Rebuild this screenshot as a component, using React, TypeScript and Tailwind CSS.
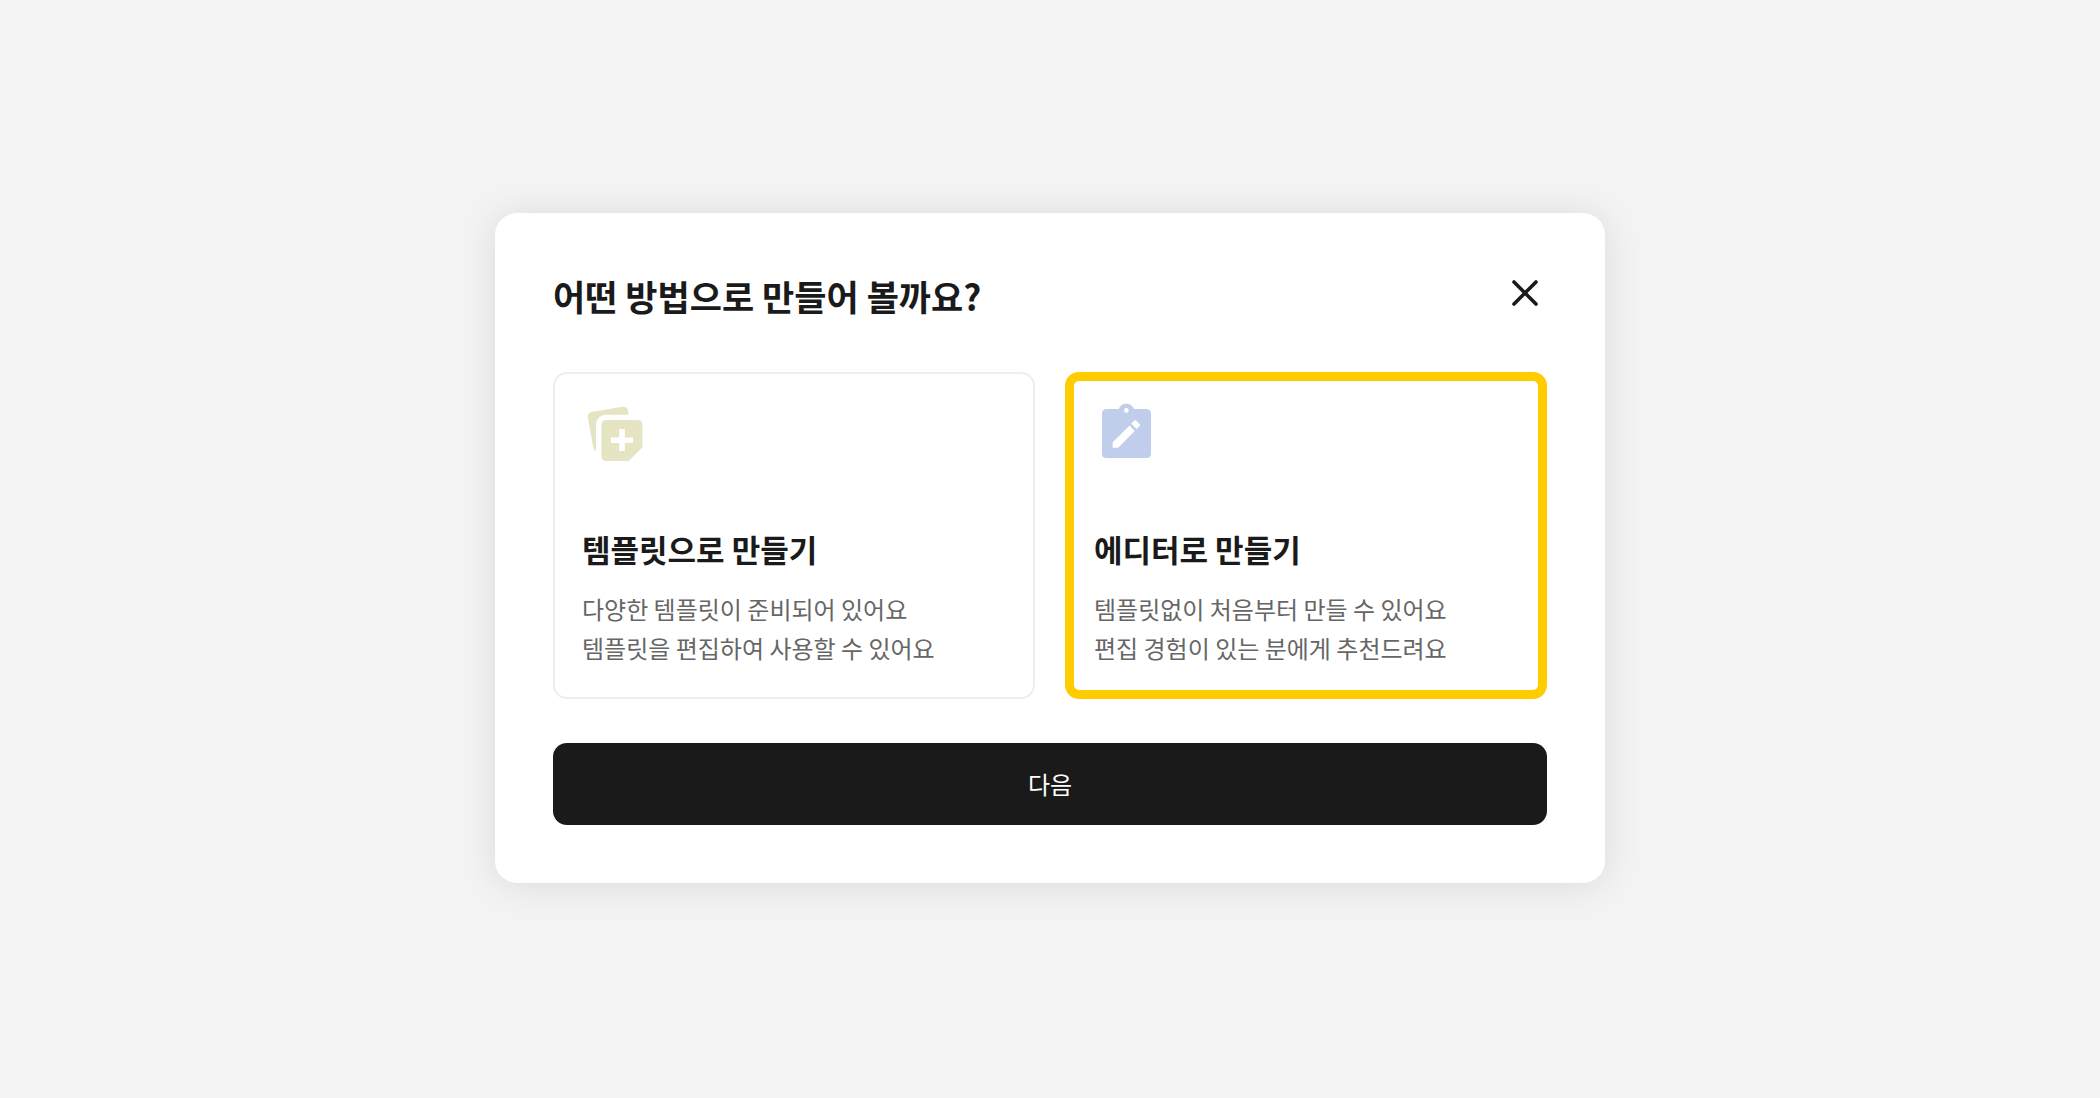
import { useState } from "react";
import type { ReactNode } from "react";

function TemplateIcon() {
  return (
    <svg viewBox="0 0 64 64" className="size-16 fill-[#e6e5c3]" aria-hidden="true">
      <path d="M14 51Q11.8 50 11.3 47.6L5.8 17.6Q5.2 13 9.6 12L40.5 6.7Q45 6.3 46 10.3L46.6 14.7H25Q14 15 14 26Z" />
      <path
        fillRule="evenodd"
        d="M24.3 20H55.5Q60.4 20 60.4 25V47.3L46.7 61H24.3Q19.4 61 19.4 56V25Q19.4 20 24.3 20ZM37.2 29V37.5H29V43H37.2V51H42.8V43H51V37.5H42.8V29Z"
      />
    </svg>
  );
}

function EditorIcon() {
  return (
    <svg viewBox="0 0 64 64" className="size-16 fill-[#c1ceeb]" aria-hidden="true">
      <path
        fillRule="evenodd"
        d="M12.6 9H24.8C25.8 5.7 28.8 3.7 32.4 3.7S39 5.7 40 9H52.4Q57 9 57 13.6V53.4Q57 58 52.4 58H12.6Q8 58 8 53.4V13.6Q8 9 12.6 9ZM32.4 8.1A2.3 2.3 0 1 0 32.4 12.7A2.3 2.3 0 1 0 32.4 8.1ZM18.7 42.3V47.7H24.2L40.8 30.9L35.6 25.5ZM37.3 23.7L40.3 20.6Q41.2 19.7 42.1 20.6L45.7 24.2Q46.4 25 45.7 25.8L42.6 29Z"
      />
    </svg>
  );
}

type Option = { id: string; icon: ReactNode; title: string; lines: string[] };

const options: Option[] = [
  {
    id: "template",
    icon: <TemplateIcon />,
    title: "템플릿으로 만들기",
    lines: ["다양한 템플릿이 준비되어 있어요", "템플릿을 편집하여 사용할 수 있어요"],
  },
  {
    id: "editor",
    icon: <EditorIcon />,
    title: "에디터로 만들기",
    lines: ["템플릿없이 처음부터 만들 수 있어요", "편집 경험이 있는 분에게 추천드려요"],
  },
];

export default function App() {
  const [selected, setSelected] = useState("editor");

  return (
    <main className="flex min-h-screen items-center justify-center bg-[#f3f3f3] pb-0.5 font-['Noto_Sans_CJK_KR',sans-serif] text-[#1a1a1a]">
      <section
        role="dialog"
        aria-labelledby="dialog-title"
        className="w-full max-w-[1110px] rounded-[22px] bg-white p-[58px] shadow-[0_2px_36px_rgba(0,0,0,0.1)]"
      >
        <header className="flex items-start justify-between">
          <h1 id="dialog-title" className="text-[35px] leading-[50px] font-bold">
            어떤 방법으로 만들어 볼까요?
          </h1>
          <button type="button" aria-label="닫기" className="cursor-pointer">
            <svg viewBox="0 0 44 44" className="size-11" fill="none" stroke="currentColor" strokeWidth="3.6" strokeLinecap="round">
              <path d="M11 11L33 33M33 11L11 33" />
            </svg>
          </button>
        </header>

        <div role="radiogroup" aria-labelledby="dialog-title" className="mt-[51px] grid grid-cols-2 gap-[30px]">
          {options.map((option) => (
            <label
              key={option.id}
              className="cursor-pointer rounded-[14px] px-[29px] pt-7 pb-8 ring-2 ring-[#eeeeee] ring-inset has-checked:ring-[9px] has-checked:ring-[#ffcc00]"
            >
              <input
                type="radio"
                name="method"
                value={option.id}
                checked={selected === option.id}
                onChange={() => setSelected(option.id)}
                className="sr-only"
              />
              {option.icon}
              <span className="mt-[65px] block text-[31px] leading-10 font-bold">{option.title}</span>
              <span className="mt-5 block text-[24px] leading-[39px] text-[#666666]">
                {option.lines.map((line) => (
                  <span key={line} className="block">
                    {line}
                  </span>
                ))}
              </span>
            </label>
          ))}
        </div>

        <button
          type="button"
          className="mt-11 h-[82px] w-full cursor-pointer rounded-[14px] bg-[#1a1a1a] text-[24px] text-white"
        >
          다음
        </button>
      </section>
    </main>
  );
}
